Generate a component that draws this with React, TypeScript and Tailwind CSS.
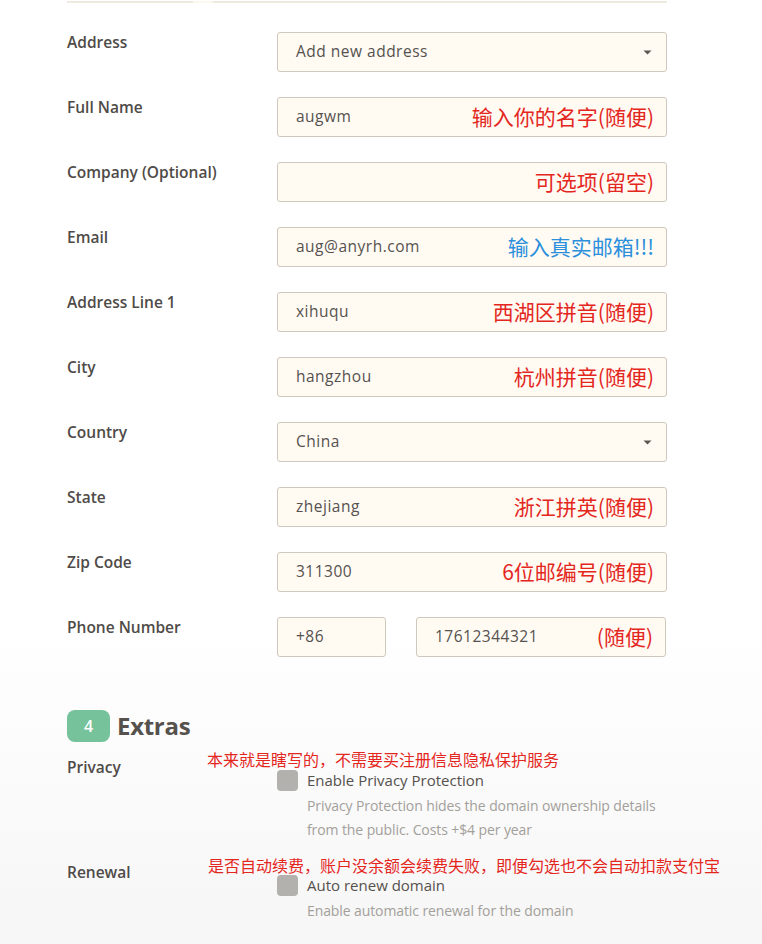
import React from "react";

const labelCls =
  "w-[210px] shrink-0 text-[15.5px] leading-[22px] font-semibold text-[#4f4b48] -mt-[1px]";
const inputCls =
  "h-10 rounded-[3px] border border-[#cfc8bc] bg-[#fffaf2] flex items-center pl-[18px] pr-3 text-[15.5px] tracking-[0.5px] text-[#555250]";
const cjk = { fontFamily: '"Noto Sans CJK SC", "Noto Sans", sans-serif' } as React.CSSProperties;

function Note({ text, blue }: { text: string; blue?: boolean }) {
  return (
    <span
      className={
        "ml-auto -mt-[2px] text-[21px] leading-none tracking-normal " +
        (blue ? "text-[#2b8fdc]" : "text-[#e4271e]")
      }
      style={cjk}
    >
      {text}
    </span>
  );
}

function Caret() {
  return (
    <svg className="ml-auto mr-[2px]" width="9" height="5" viewBox="0 0 9 5">
      <path d="M0.5 0.5 L8.5 0.5 L4.5 4.5 Z" fill="#5a5652" />
    </svg>
  );
}

function Row({
  label,
  value,
  note,
  blue,
  select,
}: {
  label: string;
  value: string;
  note?: string;
  blue?: boolean;
  select?: boolean;
}) {
  return (
    <div className="flex items-start">
      <div className={labelCls}>{label}</div>
      <div className={inputCls + " w-[390px]"}>
        <span>{value}</span>
        {select ? <Caret /> : note ? <Note text={note} blue={blue} /> : null}
      </div>
    </div>
  );
}

function Checkbox() {
  return <div className="w-[21px] h-[21px] rounded-[4px] bg-[#b3b1ad] shrink-0" />;
}

export default function App() {
  return (
    <div
      className="min-h-[944px] w-[762px] bg-[linear-gradient(to_bottom,#ffffff_0%,#ffffff_66%,#f6f6f6_100%)]"
      style={{ fontFamily: '"Open Sans", "Noto Sans CJK SC", sans-serif' }}
    >
      <div className="pl-[67px] w-[667px]">
        <div className="pt-[1px] flex h-[2px]">
          <div className="w-[126px] h-[2px] bg-[#efeadf]" />
          <div className="w-[20px] h-[2px] bg-[#fdf8ef]" />
          <div className="flex-1 h-[2px] bg-[#efeadf]" />
        </div>

        <div className="mt-[30px] flex flex-col gap-[25px]">
          <Row label="Address" value="Add new address" select />
          <Row label="Full Name" value="augwm" note="输入你的名字(随便)" />
          <Row label="Company (Optional)" value="" note="可选项(留空)" />
          <Row label="Email" value="aug@anyrh.com" note="输入真实邮箱!!!" blue />
          <Row label="Address Line 1" value="xihuqu" note="西湖区拼音(随便)" />
          <Row label="City" value="hangzhou" note="杭州拼音(随便)" />
          <Row label="Country" value="China" select />
          <Row label="State" value="zhejiang" note="浙江拼英(随便)" />
          <Row label="Zip Code" value="311300" note="6位邮编号(随便)" />
          <div className="flex items-start">
            <div className={labelCls}>Phone Number</div>
            <div className={inputCls + " w-[109px]"}>+86</div>
            <div className={inputCls + " w-[250px] ml-[30px]"}>
              <span>17612344321</span>
              <Note text="(随便)" />
            </div>
          </div>
        </div>

        <div className="mt-[53px] flex items-center gap-[7px]">
          <div className="w-[43px] h-[32px] rounded-[8px] bg-[#76c29a] text-white flex items-center justify-center text-[16px] font-semibold">
            4
          </div>
          <div className="text-[24px] font-bold text-[#55514d] leading-none tracking-[-0.3px]">Extras</div>
        </div>

        <div className="relative mt-[15px] flex items-start">
          <div className={labelCls}>Privacy</div>
          <span
            className="absolute left-[140px] -top-[8px] text-[16px] leading-[20px] text-[#e4271e] whitespace-nowrap"
            style={cjk}
          >
            本来就是瞎写的，不需要买注册信息隐私保护服务
          </span>
          <div className="pt-[13px]">
            <div className="flex items-center gap-[9px]">
              <Checkbox />
              <span className="text-[15px] leading-[21px] text-[#55514d]">Enable Privacy Protection</span>
            </div>
            <div className="pl-[30px] pt-[3px] text-[14px] leading-[24px] tracking-[-0.1px] text-[#a39f9a]">
              Privacy Protection hides the domain ownership details
              <br />
              from the public. Costs +$4 per year
            </div>
          </div>
        </div>

        <div className="relative mt-[20px] flex items-start">
          <div className={labelCls}>Renewal</div>
          <span
            className="absolute left-[141px] -top-[7px] text-[16px] leading-[20px] text-[#e4271e] whitespace-nowrap"
            style={cjk}
          >
            是否自动续费，账户没余额会续费失败，即便勾选也不会自动扣款支付宝
          </span>
          <div className="pt-[13px]">
            <div className="flex items-center gap-[9px]">
              <Checkbox />
              <span className="text-[15px] leading-[21px] text-[#55514d]">Auto renew domain</span>
            </div>
            <div className="pl-[30px] pt-[3px] text-[14px] leading-[24px] tracking-[-0.1px] text-[#a39f9a]">
              Enable automatic renewal for the domain
            </div>
          </div>
        </div>
      </div>
    </div>
  );
}
